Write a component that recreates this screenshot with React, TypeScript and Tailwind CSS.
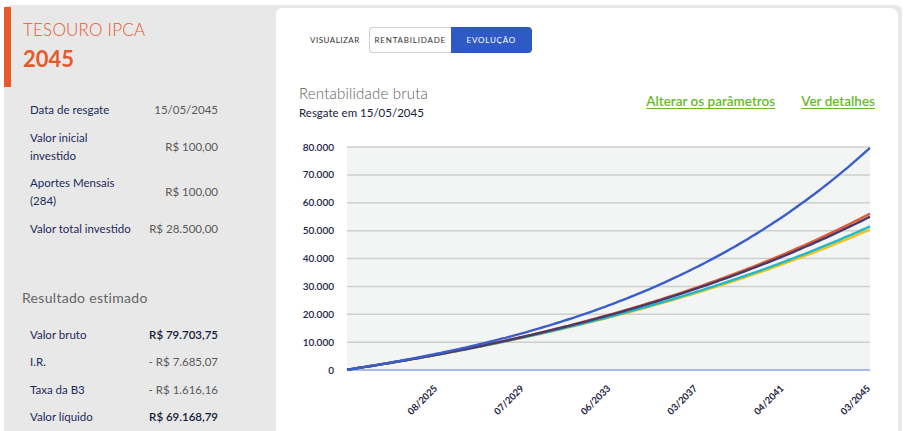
import React from 'react';

// Simulação de evolução — Tesouro IPCA 2045

const MONTHS = 284;

function futureValue(rate: number, n: number) {
  const g = Math.pow(1 + rate, n);
  return 100 * g + (100 * (g - 1)) / rate;
}

// acha a taxa mensal que leva o aporte ao valor final informado
function solveRate(target: number) {
  let lo = 0.00001;
  let hi = 0.03;
  for (let i = 0; i < 60; i++) {
    const mid = (lo + hi) / 2;
    if (futureValue(mid, MONTHS) > target) hi = mid;
    else lo = mid;
  }
  return (lo + hi) / 2;
}

const X0 = 48;
const X1 = 571;
const Y0 = 12;
const Y1 = 235;
const MAX = 80000;

function seriesPath(finalValue: number) {
  const r = solveRate(finalValue);
  const pts: string[] = [];
  for (let n = 0; n <= MONTHS; n += 2) {
    const x = X0 + (n / MONTHS) * (X1 - X0);
    const y = Y1 - (futureValue(r, n) / MAX) * (Y1 - Y0);
    pts.push(`${x.toFixed(1)},${y.toFixed(1)}`);
  }
  return 'M' + pts.join(' L');
}

const series = [
  { color: '#f2c21b', final: 50400 },
  { color: '#1fb9c9', final: 51500 },
  { color: '#e35b36', final: 56100 },
  { color: '#46396b', final: 55000 },
  { color: '#3b5fc9', final: 79703.75 },
];

const yTicks = [80000, 70000, 60000, 50000, 40000, 30000, 20000, 10000, 0];
const xTicks = ['08/2025', '07/2029', '06/2033', '03/2037', '04/2041', '03/2045'];

const params = [
  { label: ['Data de resgate'], value: '15/05/2045' },
  { label: ['Valor inicial', 'investido'], value: 'R$ 100,00' },
  { label: ['Aportes Mensais', '(284)'], value: 'R$ 100,00' },
  { label: ['Valor total investido'], value: 'R$ 28.500,00' },
];

const results = [
  { label: 'Valor bruto', value: 'R$ 79.703,75', strong: true },
  { label: 'I.R.', value: '- R$ 7.685,07', strong: false },
  { label: 'Taxa da B3', value: '- R$ 1.616,16', strong: false },
  { label: 'Valor líquido', value: 'R$ 69.168,79', strong: true },
];

function Chart() {
  const step = (Y1 - Y0) / 8;
  return (
    <svg width="576" height="296" className="block">
      <rect x={X0} y={Y0} width={X1 - X0} height={Y1 - Y0} fill="#f3f4f4" />
      {yTicks.map((v, i) => {
        const y = Y0 + i * step;
        return (
          <g key={v}>
            {v !== 0 && <line x1={X0} x2={X1} y1={y} y2={y} stroke="#cdcfcf" strokeWidth="1.5" />}
            <text x="35" y={y + 3.5} textAnchor="end" fontSize="10" fontWeight="600" fill="#1b2442" fontFamily="Lato, sans-serif">
              {v === 0 ? '0' : v.toLocaleString('pt-BR')}
            </text>
          </g>
        );
      })}
      <line x1={X0} x2={X1} y1={Y1} y2={Y1} stroke="#8ba7ea" strokeWidth="1.5" />
      {series.map((s) => (
        <path key={s.color} d={seriesPath(s.final)} fill="none" stroke={s.color} strokeWidth="2.4" strokeLinejoin="round" />
      ))}
      {xTicks.map((t, i) => {
        const x = X1 + 1 - (xTicks.length - 1 - i) * 86.6;
        return (
          <text
            key={t}
            x={x}
            y={254}
            textAnchor="end"
            fontSize="9.5"
            fontWeight="700"
            fill="#1b2442"
            fontFamily="Lato, sans-serif"
            transform={`rotate(-45 ${x} 254)`}
          >
            {t}
          </text>
        );
      })}
    </svg>
  );
}

export default function App() {
  return (
    <div className="w-[905px] h-[431px] overflow-hidden bg-white pt-[5px] pl-[4px] pr-[3px] font-['Lato',sans-serif]">
      <div className="flex h-full bg-[#e8e8e8] rounded-t-md">
        {/* coluna de parâmetros */}
        <div className="w-[272px] shrink-0 pt-[2px]">
          <div className="h-[80px] border-l-[7px] border-[#e8582b] pl-[12px] pt-[13px]">
            <div className="text-[17px] leading-[20px] font-light text-[#e8582b] tracking-[0.2px]">TESOURO IPCA</div>
            <div className="text-[22px] leading-[28px] font-bold text-[#e8582b] mt-[5px]">2045</div>
          </div>

          <div className="flex flex-col gap-[9.5px] pl-[26px] pr-[58px] mt-[14px]">
            {params.map((p) => (
              <div key={p.value + p.label[0]} className="flex items-center justify-between">
                <div className="text-[11.5px] leading-[18px] text-[#1f2a5c]">
                  {p.label.map((l) => (
                    <div key={l}>{l}</div>
                  ))}
                </div>
                <div className="text-[11.5px] leading-[18px] text-[#5a5a5a]">{p.value}</div>
              </div>
            ))}
          </div>

          <div className="pl-[18px] mt-[50px] text-[14px] leading-[20px] text-[#666] tracking-[0.3px]">Resultado estimado</div>

          <div className="flex flex-col gap-[9.5px] pl-[26px] pr-[58px] mt-[18px]">
            {results.map((r) => (
              <div key={r.label} className="flex items-center justify-between text-[11.5px] leading-[18px]">
                <span className="text-[#1f2a5c]">{r.label}</span>
                <span className={r.strong ? 'text-[#141c38] font-semibold' : 'text-[#5a5a5a]'}>{r.value}</span>
              </div>
            ))}
          </div>
        </div>

        {/* card do gráfico */}
        <div className="flex-1 bg-white rounded-tr-lg rounded-tl-md mt-[3px] mr-[4px] px-[23px] pt-[19px]">
          <div className="flex items-center ml-[11px] h-[26px]">
            <span className="text-[8px] tracking-[0.5px] text-[#333]">VISUALIZAR</span>
            <div className="flex ml-[9px] h-[26px]">
              <button className="w-[82px] h-full border border-r-0 border-[#cfcfcf] rounded-l-[4px] text-[8px] tracking-[0.8px] text-[#333] bg-white">
                RENTABILIDADE
              </button>
              <button className="w-[81px] h-full rounded-r-[4px] text-[8px] tracking-[0.8px] text-white bg-[#2f5ac6]">
                EVOLUÇÃO
              </button>
            </div>
          </div>

          <div className="flex justify-between mt-[30px]">
            <div>
              <div className="text-[15px] leading-[20px] font-light text-[#5e5e5e] tracking-[0.2px]">Rentabilidade bruta</div>
              <div className="text-[11.5px] leading-[16px] text-[#18203c] mt-[2px]">Resgate em 15/05/2045</div>
            </div>
            <div className="flex gap-[26px] mt-[9px] text-[13.5px] leading-[18px] font-semibold text-[#64bb28]">
              <a className="underline underline-offset-2">Alterar os parâmetros</a>
              <a className="underline underline-offset-2">Ver detalhes</a>
            </div>
          </div>

          <div className="mt-[14px]">
            <Chart />
          </div>
        </div>
      </div>
    </div>
  );
}
